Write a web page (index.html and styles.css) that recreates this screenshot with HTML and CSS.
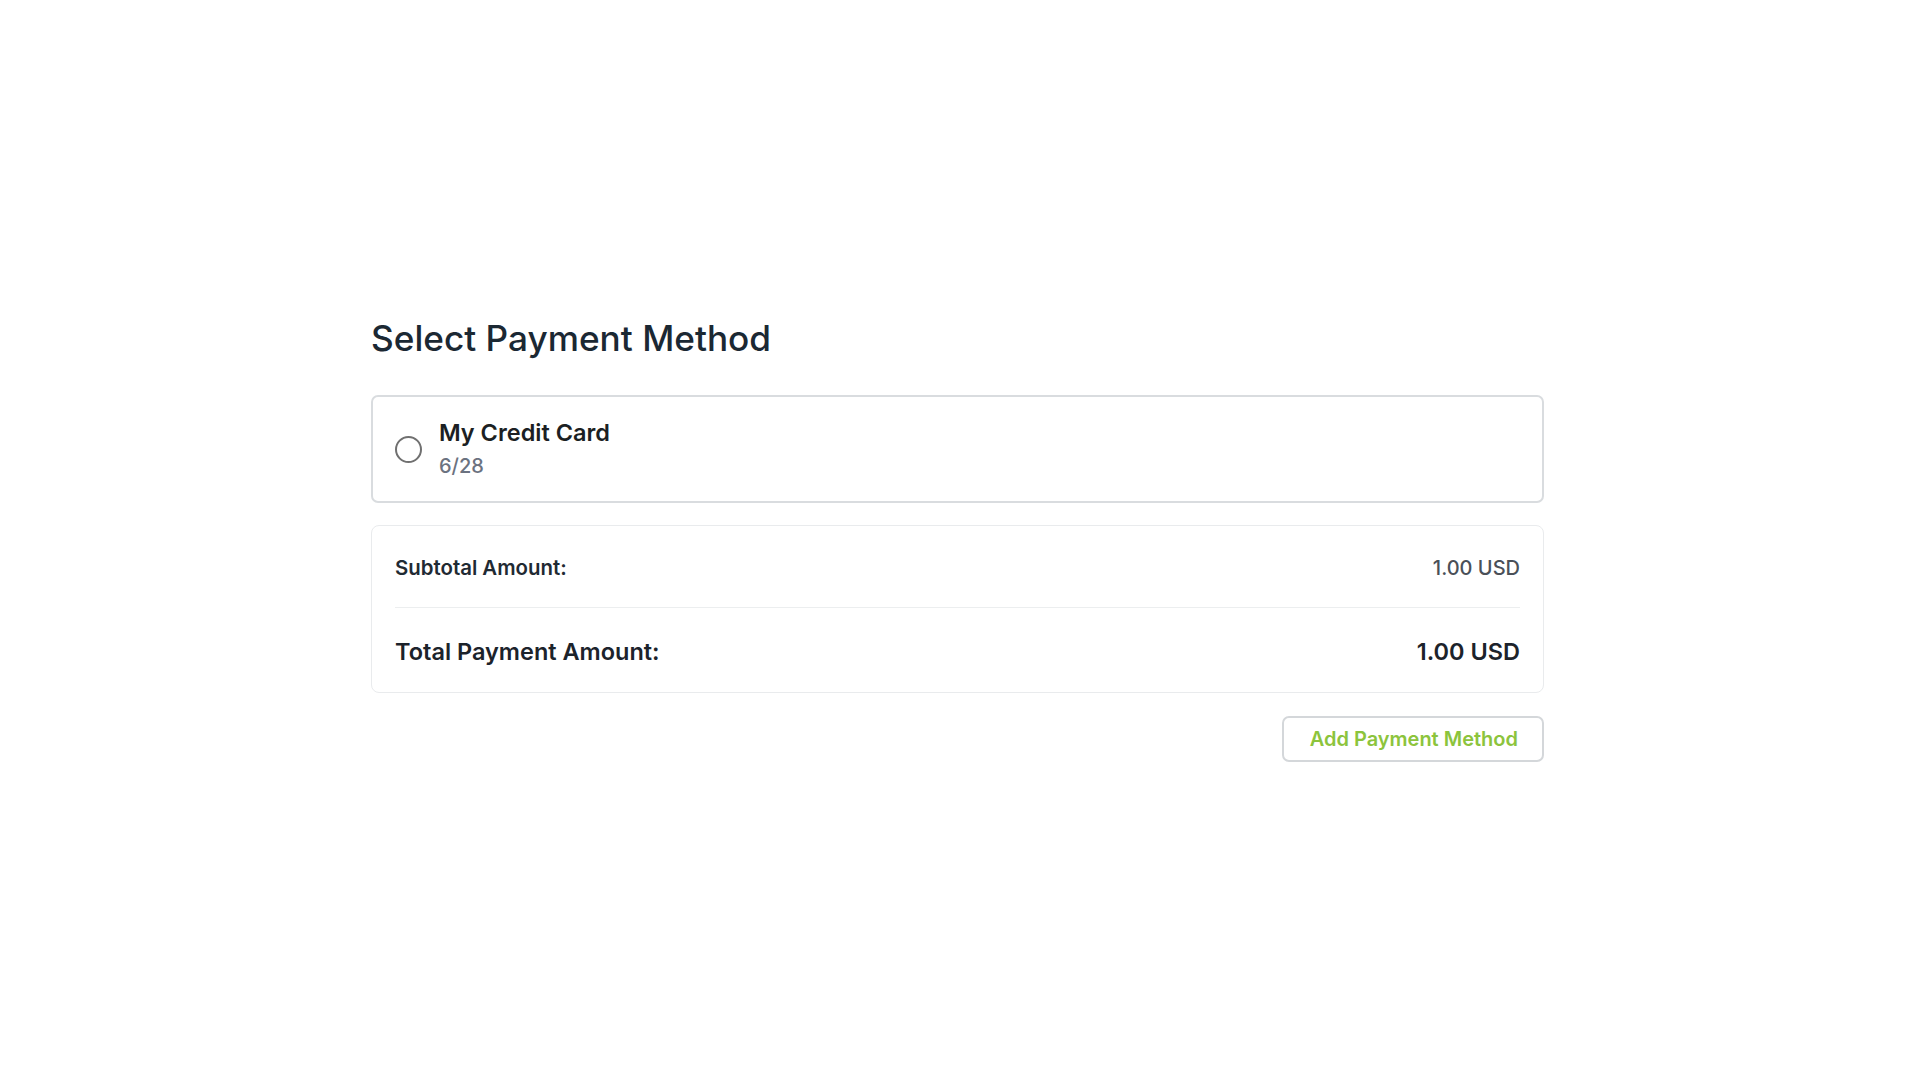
FILE: index.html
```html
<!DOCTYPE html>
<html lang="en">
<head>
<meta charset="utf-8">
<title>Select Payment Method</title>
<link rel="stylesheet" href="styles.css">
</head>
<body>
<main class="page">
  <h1 class="title">Select Payment Method</h1>
  <label class="method-card">
    <span class="radio"></span>
    <span class="method-info">
      <span class="method-name">My Credit Card</span>
      <span class="method-exp">6/28</span>
    </span>
  </label>
  <section class="summary">
    <div class="row row-sub">
      <span class="label">Subtotal Amount:</span>
      <span class="value">1.00 USD</span>
    </div>
    <div class="row row-total">
      <span class="label">Total Payment Amount:</span>
      <span class="value">1.00 USD</span>
    </div>
  </section>
  <div class="actions">
    <button class="add-btn" type="button">Add Payment Method</button>
  </div>
</main>
</body>
</html>
```

FILE: styles.css
```css
* { box-sizing: border-box; }

html, body {
  margin: 0;
  padding: 0;
  background: #ffffff;
}

body {
  font-family: "Inter", "Noto Sans", "Liberation Sans", sans-serif;
  color: #1f2328;
}

.page {
  width: 1173px;
  margin-left: 371px;
  padding-top: 316px;
  display: flex;
  flex-direction: column;
}

.title {
  margin: 0 0 35px;
  font-size: 35.2px;
  line-height: 44px;
  font-weight: 500;
  color: #1b2833;
}

.method-card {
  display: flex;
  align-items: center;
  height: 108px;
  padding: 0 22px;
  border: 2px solid #d9dcdf;
  border-radius: 7px;
  gap: 17px;
  cursor: pointer;
}

.radio {
  width: 27px;
  height: 27px;
  border-radius: 50%;
  border: 2.5px solid #707070;
  flex: none;
}

.method-info {
  display: flex;
  flex-direction: column;
  gap: 6px;
  margin-top: -2px;
}

.method-name {
  font-size: 23.5px;
  line-height: 28px;
  font-weight: 600;
  color: #1c1f23;
}

.method-exp {
  font-size: 20px;
  line-height: 24px;
  font-weight: 500;
  color: #6b7280;
  margin-top: 1px;
}

.summary {
  margin-top: 22px;
  border: 1px solid #e9ebed;
  border-radius: 8px;
  padding: 0 23px;
}

.row {
  display: flex;
  justify-content: space-between;
  align-items: center;
}

.row-sub {
  padding: 30px 0 27px;
  border-bottom: 1px solid #eceeef;
  font-size: 20px;
  line-height: 24px;
}

.row-sub .label {
  font-size: 20.4px;
  font-weight: 600;
  color: #1f2a33;
}

.row-sub .value {
  font-weight: 500;
  color: #4a5058;
}

.row-total {
  padding: 30px 0 26px;
  font-size: 23.5px;
  line-height: 28px;
  font-weight: 600;
  color: #1c232b;
}

.actions {
  display: flex;
  justify-content: flex-end;
  margin-top: 23px;
}

.add-btn {
  height: 46px;
  padding: 0 24px 0 26px;
  background: #ffffff;
  border: 2px solid #d4d7da;
  border-radius: 7px;
  font-family: inherit;
  font-size: 20px;
  font-weight: 600;
  color: #8cc43c;
  cursor: pointer;
}
```
